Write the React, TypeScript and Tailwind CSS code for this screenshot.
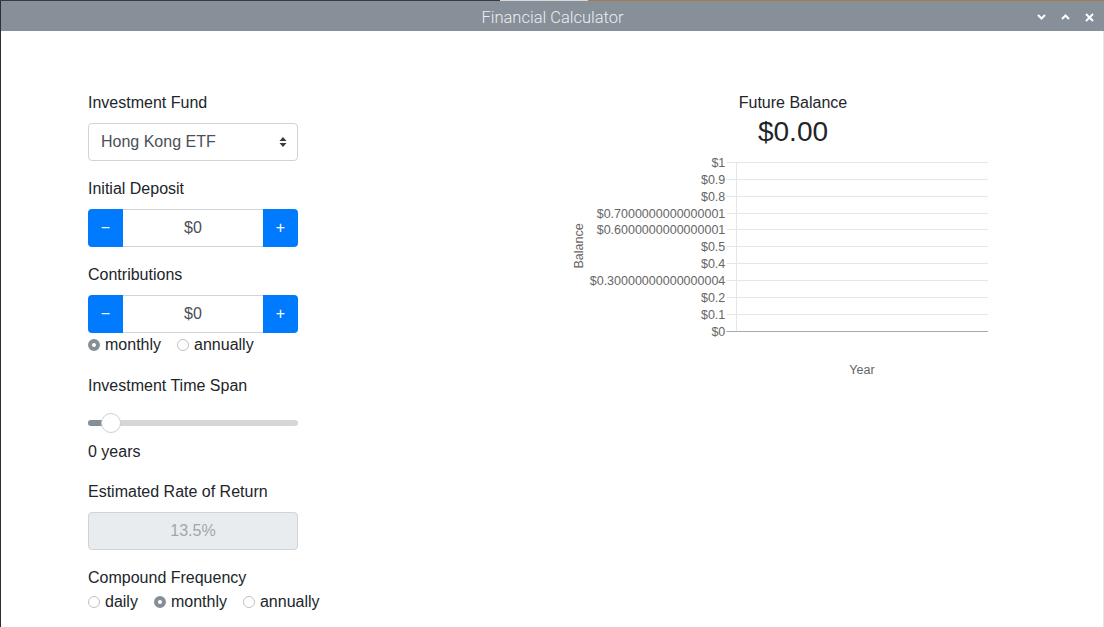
import React from "react";

const Radio = ({ checked, label }: { checked?: boolean; label: string }) => (
  <span className="flex items-center mr-4">
    {checked ? (
      <span className="w-3 h-3 rounded-full border-[4px] border-[#868e96] bg-white box-border" />
    ) : (
      <span className="w-3 h-3 rounded-full border-[1.5px] border-[#c2c2c2] bg-white box-border" />
    )}
    <span className="ml-[5px]">{label}</span>
  </span>
);

const Stepper = () => (
  <div className="flex h-[38px] w-[210px]">
    <div className="w-[35px] bg-[#007bff] rounded-l-[4px] flex items-center justify-center text-white text-base">−</div>
    <div className="flex-1 border-y border-[#ced4da] flex items-center justify-center text-[#495057]">$0</div>
    <div className="w-[35px] bg-[#007bff] rounded-r-[4px] flex items-center justify-center text-white text-base">+</div>
  </div>
);

const ticks = [
  "$1",
  "$0.9",
  "$0.8",
  "$0.7000000000000001",
  "$0.6000000000000001",
  "$0.5",
  "$0.4",
  "$0.30000000000000004",
  "$0.2",
  "$0.1",
  "$0",
];

const Chart = () => {
  const top = 13;
  const step = 16.87;
  return (
    <svg width="450" height="240" className="block" style={{ fontFamily: "'Liberation Sans', Arial, sans-serif" }}>
      <line x1="168.5" y1={top} x2="168.5" y2={top + step * 10} stroke="#e6e6e6" strokeWidth="1" />
      {ticks.map((t, i) => {
        const y = Math.round(top + i * step) + 0.5;
        const last = i === ticks.length - 1;
        return (
          <g key={t}>
            <line x1="158.5" y1={y} x2="420" y2={y} stroke={last ? "#a9a9a9" : "#e6e6e6"} strokeWidth="1" />
            <text x="157.3" y={y + 4.3} textAnchor="end" fontSize="12.5" fill="#666">
              {t}
            </text>
          </g>
        );
      })}
      <text x="0" y="0" transform="translate(15 97) rotate(-90)" textAnchor="middle" fontSize="12.5" fill="#666">
        Balance
      </text>
      <text x="294" y="225" textAnchor="middle" fontSize="12.5" fill="#666">
        Year
      </text>
    </svg>
  );
};

export default function App() {
  return (
    <div className="w-[1104px] h-[627px] flex flex-col bg-white overflow-hidden font-['Liberation_Sans',Arial,sans-serif] text-base leading-6 text-[#212529]">
      <div className="h-px flex shrink-0">
        <div className="w-[500px] bg-[#3a3a3a]" />
        <div className="w-[88px] bg-[#d8d8d8]" />
        <div className="flex-1 bg-[#a47a4e]" />
      </div>
      <div className="flex flex-1">
        <div className="w-px bg-[#2e2e2e]" />
        <div className="flex-1 flex flex-col">
          <div className="h-[30px] bg-[#878f98] flex items-center relative shrink-0">
            <div className="flex-1 text-center text-[16.5px] leading-[30px] pt-[3px] text-[#eceef0] font-['Roboto',sans-serif] font-light">
              Financial Calculator
            </div>
            <div className="absolute right-0 top-0 h-[30px] flex items-center gap-[15px] pr-[10px] pt-[2px]">
              <svg width="9" height="6" viewBox="0 0 9 6">
                <path d="M1 1 L4.5 4.5 L8 1" stroke="white" strokeWidth="2" fill="none" />
              </svg>
              <svg width="9" height="6" viewBox="0 0 9 6">
                <path d="M1 5 L4.5 1.5 L8 5" stroke="white" strokeWidth="2" fill="none" />
              </svg>
              <svg width="9" height="9" viewBox="0 0 9 9">
                <path d="M1 1 L8 8 M8 1 L1 8" stroke="white" strokeWidth="2" fill="none" />
              </svg>
            </div>
          </div>
          <div className="flex-1 flex pt-[60px] pl-[87px] border-r border-[#e4e4e4]">
            <div className="w-[450px] flex flex-col">
              <div className="mb-2">Investment Fund</div>
              <div className="w-[210px] h-[38px] border border-[#ced4da] rounded-[4px] flex items-center justify-between pl-3 pr-[10px] text-[#495057]">
                <span>Hong Kong ETF</span>
                <svg width="8" height="12" viewBox="0 0 8 12">
                  <path d="M4 1 L7.5 5 L0.5 5 Z M4 11 L7.5 7 L0.5 7 Z" fill="#343a40" />
                </svg>
              </div>
              <div className="mt-4 mb-2">Initial Deposit</div>
              <Stepper />
              <div className="mt-4 mb-2">Contributions</div>
              <Stepper />
              <div className="flex">
                <Radio checked label="monthly" />
                <Radio label="annually" />
              </div>
              <div className="mt-[17px]">Investment Time Span</div>
              <div className="mt-2 h-[34px] w-[210px] flex items-center relative">
                <div className="w-full h-[6px] rounded-full bg-[#d6d6d6] flex">
                  <div className="w-[18px] h-[6px] rounded-l-full bg-[#868e96]" />
                </div>
                <div className="absolute left-[13px] top-[7px] w-[20px] h-[20px] rounded-full bg-white border border-[#cfcfcf]" />
              </div>
              <div>0 years</div>
              <div className="mt-4 mb-2">Estimated Rate of Return</div>
              <div className="w-[210px] h-[38px] border border-[#ced4da] rounded-[4px] bg-[#e9ecef] flex items-center justify-center text-[#a0a6ac]">
                13.5%
              </div>
              <div className="mt-4">Compound Frequency</div>
              <div className="flex">
                <Radio label="daily" />
                <Radio checked label="monthly" />
                <Radio label="annually" />
              </div>
            </div>
            <div className="w-[450px] ml-[30px] flex flex-col items-center">
              <div>Future Balance</div>
              <div className="text-[28px] leading-[33.6px]">$0.00</div>
              <Chart />
            </div>
          </div>
        </div>
      </div>
    </div>
  );
}
